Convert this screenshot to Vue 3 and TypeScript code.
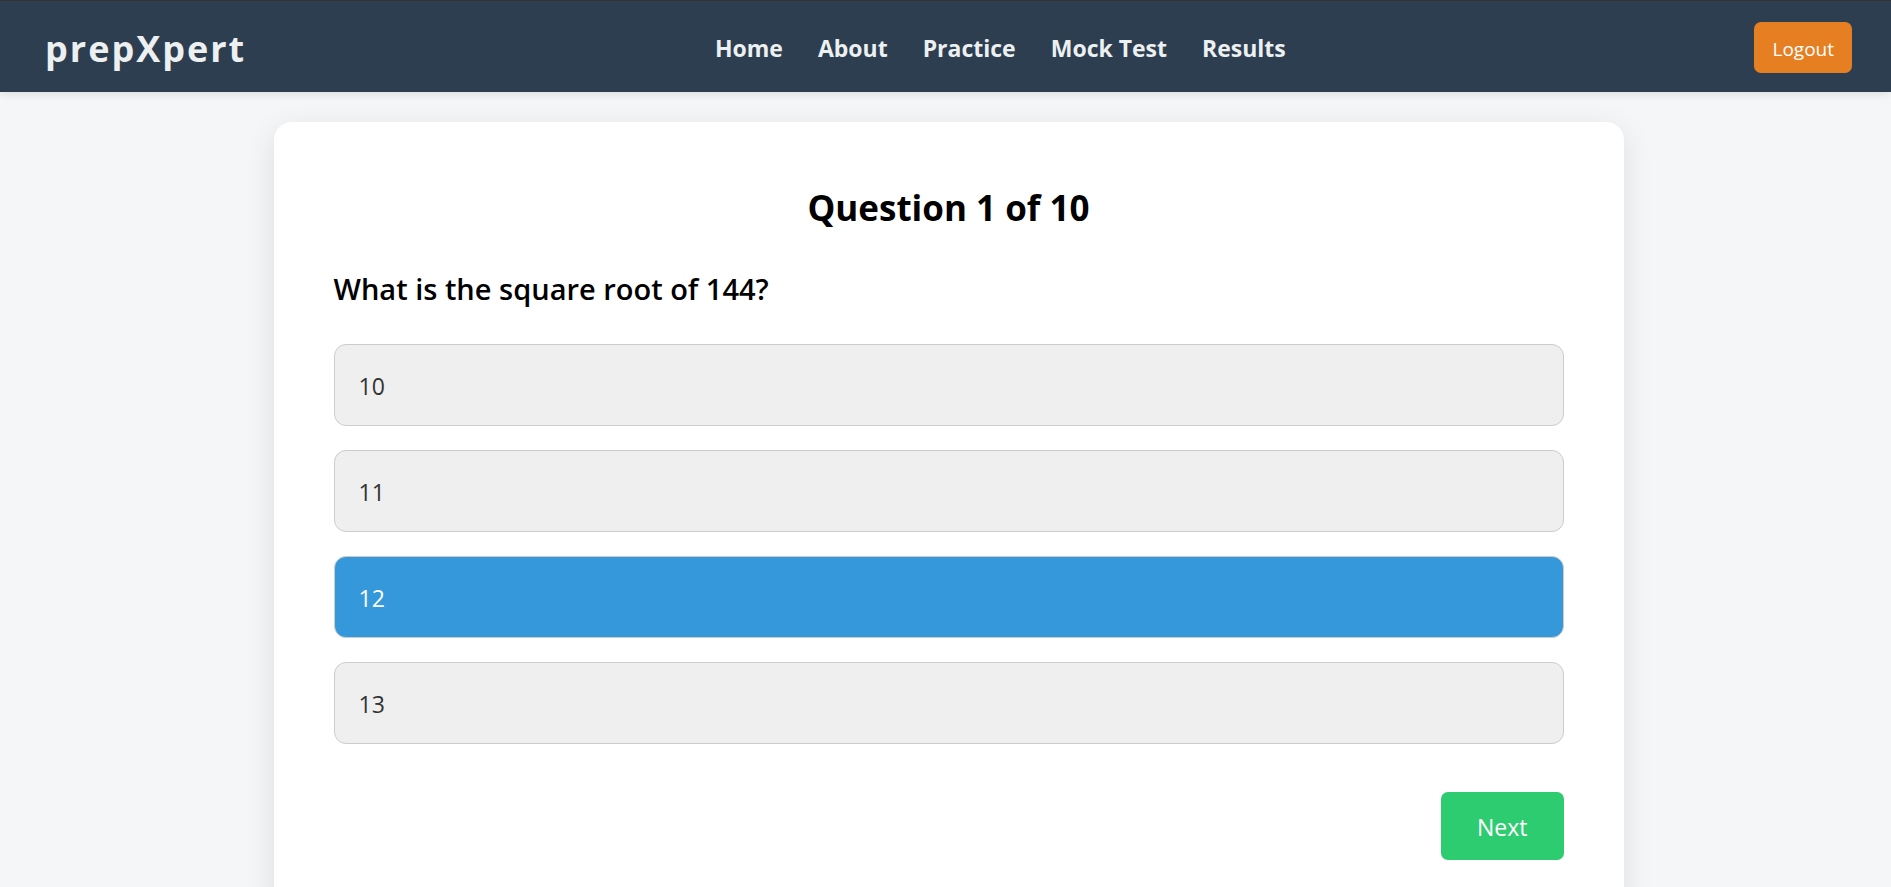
<script setup lang="ts">
import { ref } from 'vue'

const links = ['Home', 'About', 'Practice', 'Mock Test', 'Results']
const options = ['10', '11', '12', '13']
const selected = ref('12')
</script>

<template>
  <div class="page">
    <header class="navbar">
      <div class="logo">prepXpert</div>
      <nav class="links">
        <a v-for="link in links" :key="link" href="#">{{ link }}</a>
      </nav>
      <button class="logout" type="button">Logout</button>
    </header>
    <main class="content">
      <section class="card">
        <h2>Question 1 of 10</h2>
        <p class="question">What is the square root of 144?</p>
        <div class="options">
          <button
            v-for="option in options"
            :key="option"
            type="button"
            class="option"
            :class="{ selected: option === selected }"
            :aria-pressed="option === selected"
            @click="selected = option"
          >{{ option }}</button>
        </div>
        <div class="actions">
          <button class="next" type="button">Next</button>
        </div>
      </section>
    </main>
  </div>
</template>

<style>
body {
  margin: 0;
  background: #f4f6f8;
}
</style>

<style scoped>
.page,
.page button {
  font-family: "Segoe UI", "Open Sans", "Noto Sans", sans-serif;
}
.navbar {
  box-sizing: border-box;
  display: flex;
  align-items: center;
  justify-content: space-between;
  height: 92px;
  padding: 2px 39px 0 45px;
  border-top: 1px solid #333;
  background: #2c3e50;
  box-shadow: 0 2px 8px rgba(0, 0, 0, 0.1);
}
.logo {
  padding-top: 2px;
  color: #ecf0f1;
  font-size: 36px;
  font-weight: 700;
  letter-spacing: 2px;
}
.links {
  display: flex;
  gap: 35px;
}
.links a {
  color: #ecf0f1;
  font-size: 23px;
  font-weight: 700;
  text-decoration: none;
}
.logout {
  height: 51px;
  padding: 2px 18px 0;
  border: 0;
  border-radius: 7px;
  background: #e67e22;
  color: #fff;
  font-size: 19px;
}
.content {
  padding: 30px 24px 30px 30px;
}
.card {
  box-sizing: border-box;
  max-width: 1350px;
  margin: 0 auto;
  padding: 60px;
  border-radius: 18px;
  background: #fff;
  box-shadow: 0 8px 30px rgba(0, 0, 0, 0.1);
}
h2 {
  margin: 0;
  color: #000;
  font-size: 35px;
  line-height: 52px;
  text-align: center;
}
.question {
  margin: 35px 0;
  color: #000;
  font-size: 29px;
  font-weight: 600;
  line-height: 40px;
}
.options {
  display: grid;
  gap: 24px;
}
.option {
  height: 82px;
  padding: 2px 24px 0;
  border: 1px solid #ccc;
  border-radius: 12px;
  background: #efefef;
  color: #333;
  font-size: 23px;
  text-align: left;
}
.option.selected {
  background: #3498db;
  color: #fff;
}
.actions {
  display: flex;
  justify-content: flex-end;
  margin-top: 48px;
}
.next {
  height: 68px;
  padding: 2px 36px 0;
  border: 0;
  border-radius: 7px;
  background: #2ecc71;
  color: #fff;
  font-size: 23px;
}
</style>
